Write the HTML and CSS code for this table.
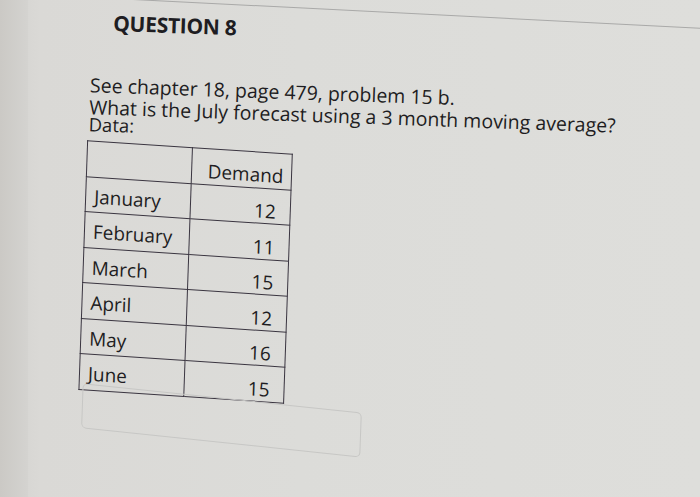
FILE: index.html
```html
<!DOCTYPE html>
<html>
<head>
<meta charset="utf-8">
<link rel="stylesheet" href="styles.css">
</head>
<body>
<div class="page">
  <div class="edge"></div>
  <div class="sheet">
    <div class="rule"></div>
    <div class="question">
      <h1 class="qtitle">QUESTION 8</h1>
      <div class="prompt">
        <p class="line">See chapter 18, page 479, problem 15 b.</p>
        <p class="line">What is the July forecast using a 3 month moving average?</p>
        <p class="line data">Data:</p>
      </div>
      <table class="grid">
        <colgroup><col class="c1"><col class="c2"></colgroup>
        <tr><th class="month"></th><th class="num">Demand</th></tr>
        <tr><td class="month">January</td><td class="num">12</td></tr>
        <tr><td class="month">February</td><td class="num">11</td></tr>
        <tr><td class="month">March</td><td class="num">15</td></tr>
        <tr><td class="month">April</td><td class="num">12</td></tr>
        <tr><td class="month">May</td><td class="num">16</td></tr>
        <tr><td class="month">June</td><td class="num">15</td></tr>
      </table>
      <div class="answer"></div>
    </div>
  </div>
</div>
</body>
</html>
```
FILE: styles.css
```css
html, body {
  margin: 0;
  padding: 0;
  width: 700px;
  height: 497px;
  overflow: hidden;
  background: #d8d8d5;
}
.page {
  display: flex;
  width: 700px;
  height: 497px;
  overflow: hidden;
  background: linear-gradient(90deg, #d2d1ce 0px, #dad9d6 40px, #dcdcd9 300px, #dededb 700px);
  font-family: "Open Sans", "DejaVu Sans", sans-serif;
  color: #1e1d22;
}
.edge {
  width: 28px;
  flex: none;
  background: linear-gradient(90deg, #cbc9c5, #d4d3d0);
}
.sheet {
  flex: 1;
  min-width: 0;
  transform: rotate(2deg);
  transform-origin: 0 0;
}
.rule {
  height: 1px;
  margin: -5px -20px 0 84px;
  background: #a9a9a8;
  transform: rotate(0.9deg);
  transform-origin: 0 0;
}
.question {
  padding-left: 84px;
}
.qtitle {
  margin: 10px 0 0 2px;
  font-size: 21px;
  font-weight: 700;
  letter-spacing: -0.3px;
  line-height: 28px;
}
.prompt {
  margin-top: 38px;
  margin-left: -19px;
}
.line {
  margin: 0;
  font-size: 19.5px;
  line-height: 22px;
}
.data {
  margin-top: -4px;
  line-height: 20px;
  font-size: 18.5px;
}
.grid {
  margin-left: -20px;
  margin-top: 6px;
  border-collapse: collapse;
  table-layout: fixed;
  width: 205px;
  font-size: 19px;
  transform: skewY(1.8deg);
  transform-origin: 0 0;
}
.c1 { width: 105px; }
.c2 { width: 100px; }
.grid th, .grid td {
  box-sizing: border-box;
  border: 1.5px solid #3a3540;
  height: 35.5px;
  padding: 0 8px;
  font-weight: 400;
  line-height: 24px;
  white-space: nowrap;
}
.grid th {
  vertical-align: bottom;
  text-align: center;
  padding: 0 4px 1px 12px;
}
.month {
  text-align: left;
  vertical-align: top;
}
.grid td.month {
  padding-top: 7px;
}
.grid td.num {
  text-align: right;
  vertical-align: bottom;
  padding: 0 14px 0 0;
}
.answer {
  margin: -7px 0 0 -16px;
  width: 278px;
  height: 43px;
  border: 1.5px solid #c7c7c5;
  border-radius: 5px;
  transform: skewY(4deg);
  transform-origin: 0 0;
}
```
